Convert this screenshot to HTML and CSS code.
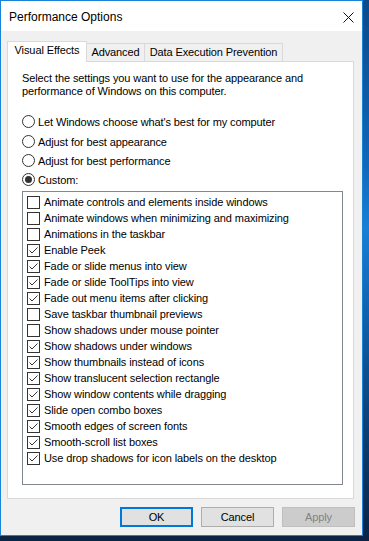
FILE: index.html
```html
<!DOCTYPE html>
<html>
<head>
<meta charset="utf-8">
<title>Performance Options</title>
<link rel="stylesheet" href="styles.css">
</head>
<body>
<div class="window">
  <div class="titlebar">
    <span class="title">Performance Options</span>
    <span class="close"><svg width="11" height="11" viewBox="0 0 11 11"><path d="M0.5 0.5L10.5 10.5M10.5 0.5L0.5 10.5" stroke="#111" stroke-width="1"/></svg></span>
  </div>
  <div class="client">
    <div class="tabs">
      <div class="tab sel">Visual Effects</div>
      <div class="tab t2">Advanced</div>
      <div class="tab t3">Data Execution Prevention</div>
    </div>
    <div class="panel">
      <p class="desc">Select the settings you want to use for the appearance and<br>performance of Windows on this computer.</p>
      <div class="radios">
        <div class="radio first"><svg class="rb" width="13" height="13" viewBox="0 0 13 13"><circle cx="6.5" cy="6.5" r="6" fill="#fff" stroke="#333"/></svg><span>Let Windows choose what's best for my computer</span></div>
        <div class="radio"><svg class="rb" width="13" height="13" viewBox="0 0 13 13"><circle cx="6.5" cy="6.5" r="6" fill="#fff" stroke="#333"/></svg><span>Adjust for best appearance</span></div>
        <div class="radio"><svg class="rb" width="13" height="13" viewBox="0 0 13 13"><circle cx="6.5" cy="6.5" r="6" fill="#fff" stroke="#333"/></svg><span>Adjust for best performance</span></div>
        <div class="radio"><svg class="rb" width="13" height="13" viewBox="0 0 13 13"><circle cx="6.5" cy="6.5" r="6" fill="#fff" stroke="#333"/><circle cx="6.5" cy="6.5" r="3.5" fill="#333"/></svg><span>Custom:</span></div>
      </div>
      <div class="list">
        <div class="item"><svg class="cb" width="13" height="13" viewBox="0 0 13 13"><rect x="0.5" y="0.5" width="12" height="12" fill="#fff" stroke="#333"/></svg><span>Animate controls and elements inside windows</span></div>
        <div class="item"><svg class="cb" width="13" height="13" viewBox="0 0 13 13"><rect x="0.5" y="0.5" width="12" height="12" fill="#fff" stroke="#333"/></svg><span>Animate windows when minimizing and maximizing</span></div>
        <div class="item"><svg class="cb" width="13" height="13" viewBox="0 0 13 13"><rect x="0.5" y="0.5" width="12" height="12" fill="#fff" stroke="#333"/></svg><span>Animations in the taskbar</span></div>
        <div class="item"><svg class="cb" width="13" height="13" viewBox="0 0 13 13"><rect x="0.5" y="0.5" width="12" height="12" fill="#fff" stroke="#333"/><path d="M2.5 6.5L5 9L10.5 3.5" fill="none" stroke="#333"/></svg><span>Enable Peek</span></div>
        <div class="item"><svg class="cb" width="13" height="13" viewBox="0 0 13 13"><rect x="0.5" y="0.5" width="12" height="12" fill="#fff" stroke="#333"/><path d="M2.5 6.5L5 9L10.5 3.5" fill="none" stroke="#333"/></svg><span>Fade or slide menus into view</span></div>
        <div class="item"><svg class="cb" width="13" height="13" viewBox="0 0 13 13"><rect x="0.5" y="0.5" width="12" height="12" fill="#fff" stroke="#333"/><path d="M2.5 6.5L5 9L10.5 3.5" fill="none" stroke="#333"/></svg><span>Fade or slide ToolTips into view</span></div>
        <div class="item"><svg class="cb" width="13" height="13" viewBox="0 0 13 13"><rect x="0.5" y="0.5" width="12" height="12" fill="#fff" stroke="#333"/><path d="M2.5 6.5L5 9L10.5 3.5" fill="none" stroke="#333"/></svg><span>Fade out menu items after clicking</span></div>
        <div class="item"><svg class="cb" width="13" height="13" viewBox="0 0 13 13"><rect x="0.5" y="0.5" width="12" height="12" fill="#fff" stroke="#333"/></svg><span>Save taskbar thumbnail previews</span></div>
        <div class="item"><svg class="cb" width="13" height="13" viewBox="0 0 13 13"><rect x="0.5" y="0.5" width="12" height="12" fill="#fff" stroke="#333"/></svg><span>Show shadows under mouse pointer</span></div>
        <div class="item"><svg class="cb" width="13" height="13" viewBox="0 0 13 13"><rect x="0.5" y="0.5" width="12" height="12" fill="#fff" stroke="#333"/><path d="M2.5 6.5L5 9L10.5 3.5" fill="none" stroke="#333"/></svg><span>Show shadows under windows</span></div>
        <div class="item"><svg class="cb" width="13" height="13" viewBox="0 0 13 13"><rect x="0.5" y="0.5" width="12" height="12" fill="#fff" stroke="#333"/><path d="M2.5 6.5L5 9L10.5 3.5" fill="none" stroke="#333"/></svg><span>Show thumbnails instead of icons</span></div>
        <div class="item"><svg class="cb" width="13" height="13" viewBox="0 0 13 13"><rect x="0.5" y="0.5" width="12" height="12" fill="#fff" stroke="#333"/><path d="M2.5 6.5L5 9L10.5 3.5" fill="none" stroke="#333"/></svg><span>Show translucent selection rectangle</span></div>
        <div class="item"><svg class="cb" width="13" height="13" viewBox="0 0 13 13"><rect x="0.5" y="0.5" width="12" height="12" fill="#fff" stroke="#333"/><path d="M2.5 6.5L5 9L10.5 3.5" fill="none" stroke="#333"/></svg><span>Show window contents while dragging</span></div>
        <div class="item"><svg class="cb" width="13" height="13" viewBox="0 0 13 13"><rect x="0.5" y="0.5" width="12" height="12" fill="#fff" stroke="#333"/><path d="M2.5 6.5L5 9L10.5 3.5" fill="none" stroke="#333"/></svg><span>Slide open combo boxes</span></div>
        <div class="item"><svg class="cb" width="13" height="13" viewBox="0 0 13 13"><rect x="0.5" y="0.5" width="12" height="12" fill="#fff" stroke="#333"/><path d="M2.5 6.5L5 9L10.5 3.5" fill="none" stroke="#333"/></svg><span>Smooth edges of screen fonts</span></div>
        <div class="item"><svg class="cb" width="13" height="13" viewBox="0 0 13 13"><rect x="0.5" y="0.5" width="12" height="12" fill="#fff" stroke="#333"/><path d="M2.5 6.5L5 9L10.5 3.5" fill="none" stroke="#333"/></svg><span>Smooth-scroll list boxes</span></div>
        <div class="item"><svg class="cb" width="13" height="13" viewBox="0 0 13 13"><rect x="0.5" y="0.5" width="12" height="12" fill="#fff" stroke="#333"/><path d="M2.5 6.5L5 9L10.5 3.5" fill="none" stroke="#333"/></svg><span>Use drop shadows for icon labels on the desktop</span></div>
      </div>
    </div>
    <div class="buttons">
      <div class="btn default">OK</div>
      <div class="btn">Cancel</div>
      <div class="btn disabled">Apply</div>
    </div>
  </div>
</div>
</body>
</html>
```
FILE: styles.css
```css
* { box-sizing: border-box; }
html, body { margin: 0; padding: 0; }
body {
  width: 369px;
  height: 541px;
  overflow: hidden;
  background: linear-gradient(180deg, #0b4a8a 0%, #1167b8 30%, #1a7fd6 42%, #0f5aa2 62%, #0a3766 85%, #0a2344 100%);
  font-family: "Liberation Sans", Arial, sans-serif;
  font-size: 11px;
  letter-spacing: -0.1px;
  color: #000;
}
.window {
  width: 363px;
  height: 536px;
  border: 1px solid #1883d7;
  background: #f0f0f0;
  display: flex;
  flex-direction: column;
}
.titlebar {
  height: 30px;
  flex: none;
  background: #fff;
  display: flex;
  align-items: center;
  justify-content: space-between;
  padding: 0 8px;
}
.title { font-size: 12px; letter-spacing: 0; padding-top: 2px; color: #000; }
.close svg { display: block; margin-top: 2px; }
.client {
  flex: 1;
  padding: 10px 7px 8px 6px;
  display: flex;
  flex-direction: column;
}
.tabs {
  display: flex;
  align-items: flex-end;
  height: 21px;
  margin-bottom: -1px;
  position: relative;
  z-index: 1;
}
.tab {
  height: 19px;
  border: 1px solid #d9d9d9;
  border-left: none;
  background: #f0f0f0;
  text-align: center;
  line-height: 14px;
  padding-top: 1px;
  white-space: nowrap;
}
.tab.sel {
  height: 21px;
  width: 80px;
  border-left: 1px solid #d9d9d9;
  border-bottom: none;
  background: #fff;
}
.t2 { width: 58px; }
.t3 { width: 138px; }
.panel {
  width: 347px;
  height: 438px;
  flex: none;
  background: #fff;
  border: 1px solid #d9d9d9;
  padding: 10px 0 0 14px;
}
.desc { margin: 0; line-height: 13px; }
.radios { margin-top: 14px; display: flex; flex-direction: column; }
.radio { height: 19px; display: flex; align-items: center; }
.radio.first { height: 20px; padding-bottom: 1px; }
.rb { flex: none; margin-right: 3px; }
.list {
  margin-top: 2px;
  width: 321px;
  height: 294px;
  border: 1px solid #828790;
  background: #fff;
  padding: 2px 0 0 4px;
}
.item { height: 16px; display: flex; align-items: center; white-space: nowrap; }
.cb { flex: none; margin-right: 4px; }
.buttons {
  margin-top: 8px;
  display: flex;
  justify-content: flex-end;
  gap: 8px;
}
.btn {
  width: 73px;
  height: 20px;
  background: #e1e1e1;
  border: 1px solid #adadad;
  display: flex;
  align-items: center;
  justify-content: center;
}
.btn.default { border: 2px solid #0078d7; }
.btn.disabled { background: #cccccc; border-color: #bfbfbf; color: #838383; }
```
